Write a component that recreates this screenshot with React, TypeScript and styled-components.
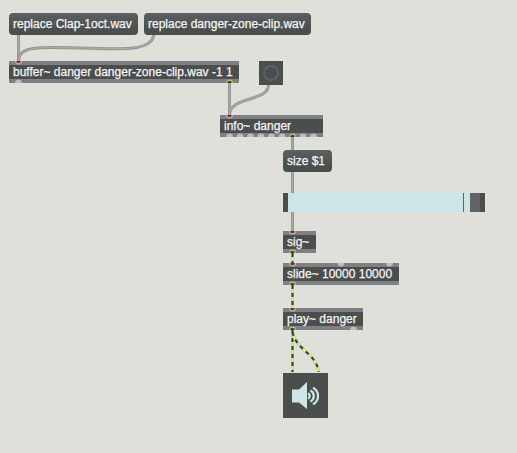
import React from "react";
import styled, { createGlobalStyle, css } from "styled-components";

const GlobalStyle = createGlobalStyle`
  html, body { margin: 0; padding: 0; background: #dfe0da; overflow: hidden; }
`;

const Patcher = styled.main`
  position: relative;
  width: 517px;
  height: 453px;
  background: #dfe0da;
  overflow: hidden;
  font-family: "Liberation Sans", Arial, sans-serif;
  font-size: 12px;
  color: #f4f5f5;
`;

type Place = { $x: number; $y: number; $w: number };

const placed = css<Place>`
  position: absolute;
  left: ${(p) => p.$x}px;
  top: ${(p) => p.$y}px;
  width: ${(p) => p.$w}px;
  box-sizing: border-box;
`;

const Message = styled.div<Place>`
  ${placed}
  height: 22px;
  padding-left: 4px;
  border-radius: 4px;
  background: linear-gradient(#5d5f63, #4a4f4d 75%);
  line-height: 22px;
`;

const ObjectBox = styled.div<Place>`
  ${placed}
  height: 22px;
  padding-left: 4px;
  border-top: 4px solid #807f86;
  border-bottom: 4px solid #807f86;
  background: #4a4f4d;
  line-height: 14px;
`;

const Label = styled.span`
  display: block;
  white-space: pre;
  -webkit-text-stroke: 0.25px #f4f5f5;
`;

const Bang = styled.div<Place>`
  ${placed}
  height: 24px;
  display: grid;
  place-items: center;
  background: #4a4f4d;
`;

const BangRing = styled.div`
  width: 16px;
  height: 16px;
  box-sizing: border-box;
  border: 2px solid #5f6065;
  border-radius: 50%;
`;

const RangeSlider = styled.div<Place>`
  ${placed}
  height: 19px;
  display: flex;
`;

const Segment = styled.div<{ $width: number; $color: string }>`
  flex: 0 0 ${(p) => p.$width}px;
  background: ${(p) => p.$color};
`;

const Dac = styled.button<Place>`
  ${placed}
  height: 45px;
  padding: 0;
  border: 0;
  background: #4a4f4d;
`;

const Overlay = styled.svg`
  position: absolute;
  inset: 0;
  pointer-events: none;
`;

const DacIcon = styled.svg`
  display: block;
`;

const controlCords = [
  "M18.5 35V61",
  "M18.5 61C18.5 51 27 47.5 50 47.5C84 47.5 94 48.7 120 48.7C142 48.7 153 44 153.5 35",
  "M229.5 83V115",
  "M268.5 85C268.5 102 229.5 96 229.5 115",
  "M292.5 137V231",
];

const signalCords = [
  "M292.5 253V263",
  "M292.5 285V308",
  "M292.5 330V372",
  "M292.5 332C296 350 317 354 318.5 372",
];

const idleOutlets = [
  { x: 18.5, y: 83 },
  ...[229.5, 240, 250.5, 261, 271.5, 282, 303, 313.5].map((x) => ({ x, y: 137 })),
  { x: 353.5, y: 330 },
];

const idleInlets = [{ x: 341, y: 263 }, { x: 389.5, y: 263 }];
const inlets = [[18.5, 61], [229.5, 115], [292.5, 231], [292.5, 263], [292.5, 308]];
const outlets = [[229.5, 83], [292.5, 137], [292.5, 253], [292.5, 285], [292.5, 330]];

const segments: [number, string][] = [
  [5, "#4a4f4d"],
  [175, "#cee5e8"],
  [1, "#626368"],
  [6, "#cee5e8"],
  [10, "#626367"],
  [5, "#4a4f4d"],
];

const down = (x: number, y: number, r: number) => `M${x - r} ${y}A${r} ${r} 0 0 0 ${x + r} ${y}`;
const up = (x: number, y: number, r: number) => `M${x - r} ${y}A${r} ${r} 0 0 1 ${x + r} ${y}`;

const Cords = () => (
  <Overlay width="517" height="453" fill="none">
    {controlCords.map((d) => (
      <g key={d}>
        <path d={d} stroke="#949593" strokeWidth="3" />
        <path d={d} stroke="#acacab" strokeWidth="1.2" />
      </g>
    ))}
    {signalCords.map((d) => (
      <g key={d}>
        <path d={d} stroke="#b9c49b" strokeWidth="3" />
        <path d={d} stroke="#d2f782" strokeWidth="1.8" />
        <path d={d} stroke="#353a32" strokeWidth="2" strokeDasharray="4 4" />
      </g>
    ))}
  </Overlay>
);

const Ports = () => (
  <Overlay width="517" height="453" fill="none">
    {idleOutlets.map(({ x, y }) => (
      <path key={`${x}-${y}`} d={up(x, y, 3.4)} fill="#bcbcc2" />
    ))}
    {idleInlets.map(({ x, y }) => (
      <path key={`${x}-${y}`} d={down(x, y, 3.4)} fill="#bcbcc2" />
    ))}
    {inlets.map(([x, y]) => (
      <path key={`${x}-${y}`} d={down(x, y, 2.9)} fill="#454541" stroke="#eba69b" strokeWidth="1.2" />
    ))}
    {outlets.map(([x, y]) => (
      <path key={`${x}-${y}`} d={up(x, y, 2.9)} fill="#41443a" stroke="#c3cd62" strokeWidth="1.1" />
    ))}
  </Overlay>
);

export default function App() {
  return (
    <>
      <GlobalStyle />
      <Patcher>
        <Cords />
        <Message $x={9} $y={13} $w={129}><Label>replace Clap-1oct.wav</Label></Message>
        <Message $x={144} $y={13} $w={167}><Label>replace danger-zone-clip.wav</Label></Message>
        <ObjectBox $x={9} $y={61} $w={230}><Label>buffer~ danger danger-zone-clip.wav -1 1</Label></ObjectBox>
        <Bang $x={259} $y={61} $w={24}><BangRing /></Bang>
        <ObjectBox $x={220} $y={115} $w={103}><Label>info~ danger</Label></ObjectBox>
        <Message $x={283} $y={150} $w={49}><Label>size $1</Label></Message>
        <RangeSlider $x={283} $y={193} $w={202}>
          {segments.map(([width, color], i) => (
            <Segment key={i} $width={width} $color={color} />
          ))}
        </RangeSlider>
        <ObjectBox $x={283} $y={231} $w={33}><Label>sig~</Label></ObjectBox>
        <ObjectBox $x={283} $y={263} $w={116}><Label>slide~ 10000 10000</Label></ObjectBox>
        <ObjectBox $x={283} $y={308} $w={80}><Label>play~ danger</Label></ObjectBox>
        <Dac $x={283} $y={373} $w={45} aria-label="Audio output">
          <DacIcon width="45" height="45" fill="none" stroke="#cee5e8">
            <path d="M9 16.5H16L24 9V36L16 29.5H9Z" fill="#cee5e8" stroke="none" />
            <path d="M25 20.3A3 3 0 0 1 25 25.7M27.4 17.6A6 6 0 0 1 27.4 28.4M30 14.8A9.2 9.2 0 0 1 30 31.2" strokeWidth="2.2" />
          </DacIcon>
        </Dac>
        <Ports />
      </Patcher>
    </>
  );
}
